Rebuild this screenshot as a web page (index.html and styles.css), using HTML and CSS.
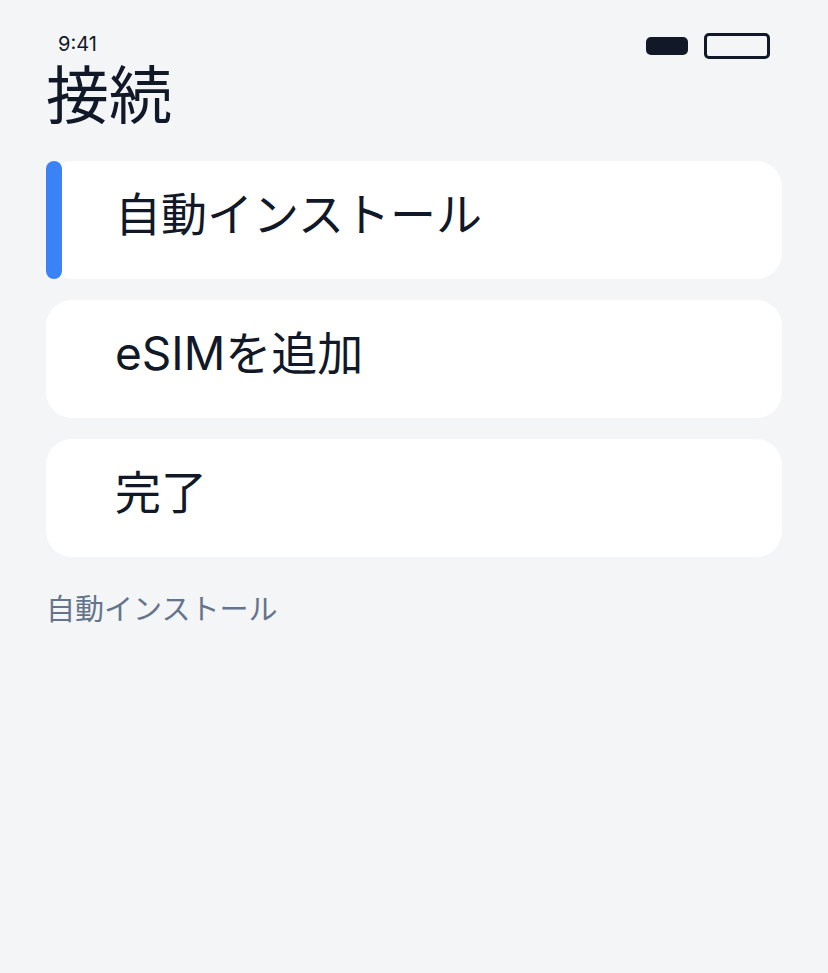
FILE: index.html
```html
<!DOCTYPE html>
<html lang="ja">
<head>
<meta charset="utf-8">
<title>接続</title>
<link rel="stylesheet" href="styles.css">
</head>
<body>
<div class="screen">
  <div class="status">
    <span class="time">9:41</span>
    <div class="indicators">
      <span class="pill-solid"></span>
      <span class="pill-outline"></span>
    </div>
  </div>
  <h1 class="title">接続</h1>
  <div class="list">
    <div class="card active"><span class="bar"></span><span class="label">自動インストール</span></div>
    <div class="card"><span class="label">eSIMを追加</span></div>
    <div class="card"><span class="label">完了</span></div>
  </div>
  <p class="caption">自動インストール</p>
</div>
</body>
</html>
```
FILE: styles.css
```css
html, body {
  margin: 0;
  padding: 0;
}
body {
  background: #f4f5f7;
  font-family: Inter, "Noto Sans CJK JP", sans-serif;
  font-weight: 400;
  color: #111827;
  width: 828px;
  height: 973px;
}
.screen {
  padding: 0 46px;
}
.status {
  display: flex;
  justify-content: space-between;
  align-items: flex-start;
  padding: 33px 12px 0;
  height: 26px;
}
.time {
  font-size: 20px;
  line-height: 20px;
  margin-top: 1px;
}
.indicators {
  display: flex;
  align-items: center;
  gap: 16px;
  height: 26px;
}
.pill-solid {
  width: 42px;
  height: 18px;
  border-radius: 5px;
  background: #111827;
}
.pill-outline {
  width: 66px;
  height: 26px;
  box-sizing: border-box;
  border: 3px solid #111827;
  border-radius: 5px;
}
.title {
  margin: 5px 0 0;
  font-size: 63px;
  line-height: 63px;
  font-weight: 400;
}
.list {
  display: flex;
  flex-direction: column;
  gap: 21px;
  margin-top: 34px;
}
.card {
  position: relative;
  height: 118px;
  box-sizing: border-box;
  background: #ffffff;
  border-radius: 26px;
  padding: 30px 0 0 69px;
}
.label {
  display: block;
  font-size: 46px;
  line-height: 46px;
}
.bar {
  position: absolute;
  left: 0;
  top: 0;
  bottom: 0;
  width: 16px;
  border-radius: 8px;
  background: #3b82f6;
}
.caption {
  margin: 38px 0 0;
  font-size: 29px;
  line-height: 29px;
  color: #64748b;
}
```
